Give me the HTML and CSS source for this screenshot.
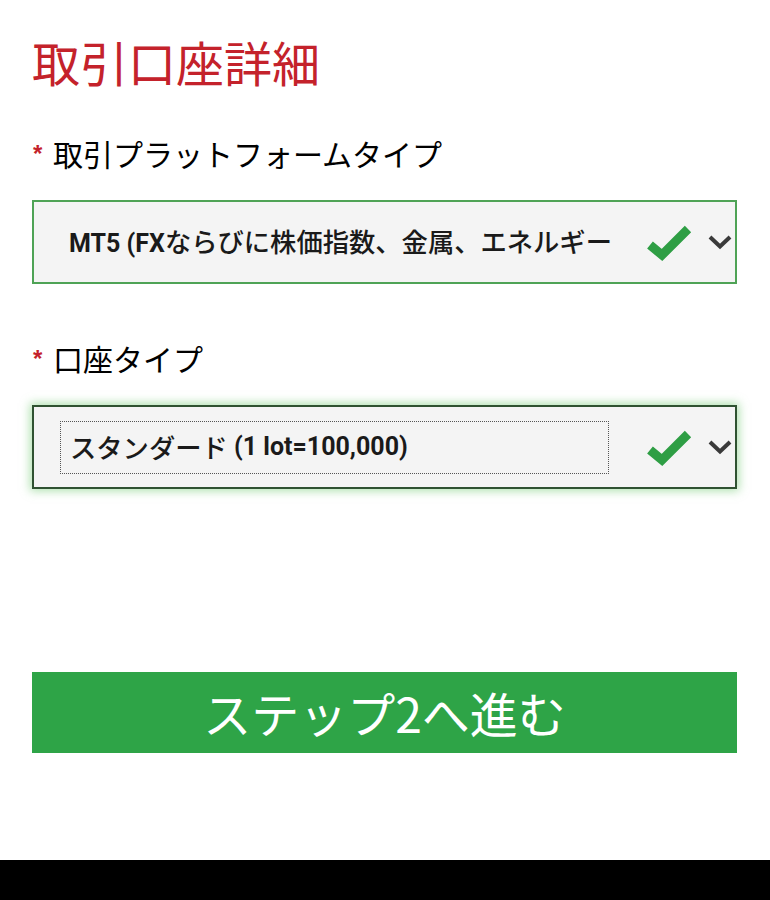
FILE: index.html
```html
<!DOCTYPE html>
<html lang="ja">
<head>
<meta charset="utf-8">
<title>取引口座詳細</title>
<link rel="stylesheet" href="styles.css">
</head>
<body>
<div class="page">
  <main class="form">
    <h1 class="title">取引口座詳細</h1>

    <div class="field field-platform">
      <label class="label"><span class="req">*</span>取引プラットフォームタイプ</label>
      <div class="select select-valid">
        <div class="value">MT5 (FX<span class="jp">ならびに株価指数、金属、エネルギー</span></div>
        <svg class="check" viewBox="0 0 46 38" width="46" height="38"><path d="M4 21 L16 31 L42 5" fill="none" stroke="#2e9e44" stroke-width="9" stroke-linejoin="miter" stroke-linecap="butt"/></svg>
        <svg class="chev" viewBox="0 0 26 16" width="26" height="16"><path d="M3 3 L13 12.5 L23 3" fill="none" stroke="#3a3a3a" stroke-width="4"/></svg>
      </div>
    </div>

    <div class="field field-account">
      <label class="label"><span class="req">*</span>口座タイプ</label>
      <div class="select select-focus">
        <div class="value value-focus"><span class="jp">スタンダード</span> (1 lot=100,000)</div>
        <svg class="check" viewBox="0 0 46 38" width="46" height="38"><path d="M4 21 L16 31 L42 5" fill="none" stroke="#2e9e44" stroke-width="9" stroke-linejoin="miter" stroke-linecap="butt"/></svg>
        <svg class="chev" viewBox="0 0 26 16" width="26" height="16"><path d="M3 3 L13 12.5 L23 3" fill="none" stroke="#3a3a3a" stroke-width="4"/></svg>
      </div>
    </div>

    <button class="next" type="button">ステップ2へ進む</button>
  </main>
  <div class="navbar"></div>
</div>
</body>
</html>
```

FILE: styles.css
```css
html, body {
  margin: 0;
  padding: 0;
  background: #ffffff;
}

.page {
  height: 900px;
  display: flex;
  flex-direction: column;
  font-family: "Noto Sans CJK JP", "Noto Sans", sans-serif;
}

.form {
  padding: 37px 33px 0 32px;
  display: flex;
  flex-direction: column;
}

.title {
  margin: 0;
  font-size: 48px;
  line-height: 48px;
  font-weight: 400;
  color: #c4222b;
}

.field {
  display: flex;
  flex-direction: column;
}

.field-platform {
  margin-top: 53px;
}

.field-account {
  margin-top: 59px;
}

.label {
  display: flex;
  align-items: center;
  height: 30px;
  font-size: 30px;
  line-height: 30px;
  font-weight: 400;
  color: #000000;
  margin-left: 1px;
}

.req {
  color: #c4222b;
  font-family: "Liberation Sans", Arial, sans-serif;
  font-weight: 700;
  font-size: 24px;
  line-height: 1;
  width: 20px;
  margin-top: 2px;
}

.select {
  margin-top: 32px;
  height: 84px;
  box-sizing: border-box;
  background: #f4f4f4;
  display: flex;
  align-items: center;
  padding: 0 0 0 35px;
}

.select-valid {
  border: 2px solid #4fa356;
}

.select-focus {
  border: 2px solid #2f5231;
  box-shadow: 0 0 9px 2px rgba(110, 200, 110, 0.55);
  padding-left: 26px;
}

.value {
  flex: 0 0 auto;
  width: 548px;
  white-space: nowrap;
  font-family: "Roboto", "Noto Sans CJK JP", sans-serif;
  font-weight: 700;
  font-size: 25px;
  line-height: 32px;
  color: #1a1a1a;
}

.jp {
  font-family: "Noto Sans CJK JP", sans-serif;
  font-size: 26.3px;
  font-weight: 500;
}

.value-focus {
  width: 549px;
  height: 53px;
  box-sizing: border-box;
  border: 1px dotted #555555;
  padding: 0 0 0 9px;
  display: flex;
  align-items: center;
  white-space: pre;
}

.check {
  flex: 0 0 auto;
  margin-left: 29px;
  margin-top: 1px;
}

.select-focus .check {
  margin-left: 37px;
}

.chev {
  flex: 0 0 auto;
  margin-left: 15px;
}

.next {
  margin-top: 183px;
  height: 81px;
  border: 0;
  background: #2ea447;
  color: #ffffff;
  font-family: "Noto Sans CJK JP", sans-serif;
  font-size: 48px;
  line-height: 81px;
  padding: 0;
  font-weight: 400;
}

.navbar {
  margin-top: auto;
  height: 40px;
  background: #000000;
}
```
